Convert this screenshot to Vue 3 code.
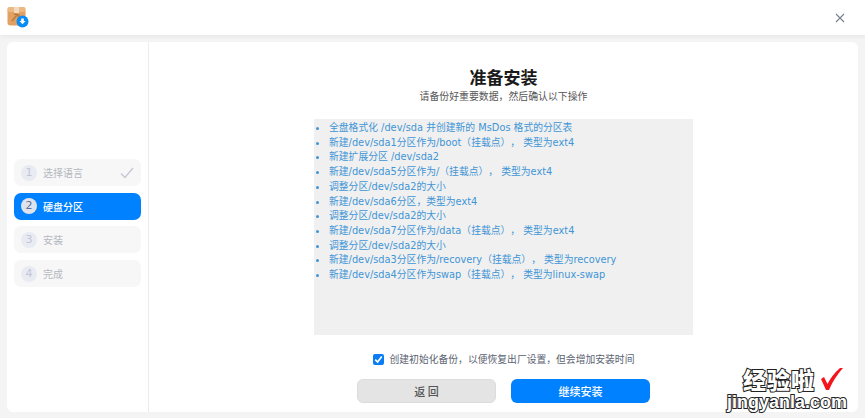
<template>
  <div class="window">
    <header class="titlebar">
      <svg class="app_icon" width="22" height="22" viewBox="0 0 22 22">
        <rect x="0.5" y="1" width="18" height="18.5" rx="3" fill="#e2a062" />
        <rect x="0.5" y="1" width="18" height="5" rx="2" fill="#edb983" />
        <rect x="7" y="1" width="5" height="6" fill="#f1d9bf" />
        <path d="M5 15 L10 9 M7 8 L12 9 L11 11" stroke="#b97b43" stroke-width="1.6" fill="none" />
        <circle cx="15.5" cy="15.5" r="6" fill="#0a8cf5" />
        <path d="M14.2 12.5h2.6v2.5h1.7l-3 3.3-3-3.3h1.7z" fill="#fff" />
      </svg>
      <button class="close_button">
        <svg width="10" height="10" viewBox="0 0 10 10">
          <path d="M1 1 L9 9 M9 1 L1 9" stroke="#77808f" stroke-width="1.1" fill="none" />
        </svg>
      </button>
    </header>

    <div class="body">
      <div class="panel">
        <aside class="sidebar">
          <div
            v-for="step in steps"
            :key="step.id"
            class="step"
            :class="{ active: step.id === 2 }"
          >
            <span class="step_num">{{ step.id }}</span>
            <span class="step_label">{{ step.label }}</span>
            <svg v-if="step.done" class="step_check" width="14" height="12" viewBox="0 0 14 12">
              <path d="M1 6.5 L5 10.5 L13 1" stroke="#c3c8d2" stroke-width="1.3" fill="none" />
            </svg>
          </div>
        </aside>

        <main class="content">
          <h1 class="title">准备安装</h1>
          <p class="subtitle">请备份好重要数据，然后确认以下操作</p>
          <ul class="ops">
            <li v-for="(op, i) in ops" :key="i">{{ op }}</li>
          </ul>
          <label class="backup">
            <svg width="11" height="11" viewBox="0 0 11 11">
              <rect width="11" height="11" rx="2" fill="#0a7cf5" />
              <path d="M2.2 5.6 L4.6 8 L8.8 2.6" stroke="#fff" stroke-width="1.7" fill="none" />
            </svg>
            <span>创建初始化备份，以便恢复出厂设置，但会增加安装时间</span>
          </label>
          <div class="buttons">
            <button class="btn back">返 回</button>
            <button class="btn next">继续安装</button>
          </div>
        </main>
      </div>
    </div>

    <div class="watermark">
      <div class="wm_top">
        <span class="wm_cn">经验啦</span>
        <svg width="23" height="24" viewBox="0 0 23 24">
          <path d="M1 12 L4 10 L7.5 17 Q12 8 20 1 L23 1 Q14 11 9 23 L6 23 Z" fill="#f5141c" />
        </svg>
      </div>
      <div class="wm_en">jingyanla.com</div>
    </div>
  </div>
</template>

<script setup>
const steps = [
  { id: 1, label: '选择语言', done: true },
  { id: 2, label: '硬盘分区' },
  { id: 3, label: '安装' },
  { id: 4, label: '完成' },
]

const ops = [
  '全盘格式化 /dev/sda 并创建新的 MsDos 格式的分区表',
  '新建/dev/sda1分区作为/boot（挂载点）， 类型为ext4',
  '新建扩展分区 /dev/sda2',
  '新建/dev/sda5分区作为/（挂载点）， 类型为ext4',
  '调整分区/dev/sda2的大小',
  '新建/dev/sda6分区，类型为ext4',
  '调整分区/dev/sda2的大小',
  '新建/dev/sda7分区作为/data（挂载点）， 类型为ext4',
  '调整分区/dev/sda2的大小',
  '新建/dev/sda3分区作为/recovery（挂载点）， 类型为recovery',
  '新建/dev/sda4分区作为swap（挂载点）， 类型为linux-swap',
]
</script>

<style>
html,
body {
  margin: 0;
  background: #fff;
}
</style>

<style scoped>
* {
  box-sizing: border-box;
  font-family: 'DejaVu Sans', 'Noto Sans CJK SC', sans-serif;
}
.window {
  position: relative;
  width: 865px;
  height: 418px;
  display: flex;
  flex-direction: column;
  background: #f4f4f4;
  overflow: hidden;
}
.titlebar {
  height: 35px;
  flex-shrink: 0;
  display: flex;
  align-items: center;
  justify-content: space-between;
  padding: 0 20px 0 7px;
  background: #fff;
  box-shadow: 0 2px 4px rgba(0, 0, 0, 0.05);
}
.app_icon {
  margin-top: -1px;
}
.close_button {
  width: 10px;
  height: 10px;
  padding: 0;
  border: 0;
  background: none;
  display: flex;
}
.body {
  flex: 1;
  padding: 7px 7px 6px;
  display: flex;
}
.panel {
  flex: 1;
  display: flex;
  background: #fff;
  border-radius: 6px;
}
.sidebar {
  width: 142px;
  flex-shrink: 0;
  border-right: 1px solid #ececec;
  padding: 117px 7px 0;
  display: flex;
  flex-direction: column;
  gap: 6.7px;
}
.step {
  height: 27px;
  display: flex;
  align-items: center;
  padding: 0 7px;
  background: #f7f7f8;
  border-radius: 7px;
  color: #b5b8bf;
  font-size: 10px;
  font-family: 'Noto Sans CJK SC', sans-serif;
}
.step_num {
  width: 16px;
  height: 16px;
  margin-right: 6px;
  border-radius: 50%;
  background: #e9ebf3;
  color: #c0c6d8;
  font-size: 11px;
  line-height: 16px;
  text-align: center;
}
.step_check {
  margin-left: auto;
}
.step.active {
  background: #0081ff;
  color: #fff;
  font-weight: 500;
}
.step.active .step_num {
  background: #dfe3ee;
  color: #5f6f95;
}
.content {
  flex: 1;
  display: flex;
  flex-direction: column;
  align-items: center;
  padding-top: 24px;
}
.title {
  margin: 0;
  font-size: 17px;
  line-height: 22px;
  font-weight: 700;
  color: #1a1a1a;
  font-family: 'Noto Sans CJK SC', sans-serif;
}
.subtitle {
  margin: 1px 0 0;
  font-size: 9.9px;
  line-height: 14px;
  color: #555;
  font-family: 'Noto Sans CJK SC', sans-serif;
}
.ops {
  width: 379px;
  height: 216px;
  margin: 16px 0 0;
  padding: 2px 0 0 15px;
  background: #f0f0f0;
  list-style: none;
  font-size: 9.8px;
  line-height: 14.7px;
  color: #3f95d6;
  text-spacing-trim: space-all;
}
.ops li {
  position: relative;
}
.ops li::before {
  content: '';
  position: absolute;
  left: -13px;
  top: 6px;
  width: 3px;
  height: 3px;
  border-radius: 50%;
  background: #3f95d6;
}
.backup {
  display: flex;
  align-items: center;
  gap: 6px;
  height: 14px;
  margin-top: 17px;
  font-size: 9.8px;
  color: #5a6170;
  font-family: 'Noto Sans CJK SC', sans-serif;
}
.buttons {
  display: flex;
  gap: 15px;
  margin-top: 13px;
}
.btn {
  width: 139px;
  height: 24px;
  padding: 0;
  border-radius: 6px;
  font-size: 11px;
  font-family: 'Noto Sans CJK SC', sans-serif;
  font-weight: 500;
}
.back {
  background: #e4e4e4;
  border: 1px solid #dcdcdc;
  color: #555;
}
.next {
  background: #0081ff;
  border: 0;
  color: #fff;
}
.watermark {
  position: absolute;
  right: 14px;
  bottom: 6px;
  width: 124px;
  pointer-events: none;
}
.wm_top {
  display: flex;
  align-items: center;
  justify-content: space-between;
  padding: 0 8px 0 16px;
  height: 26px;
}
.wm_cn {
  font-family: 'Noto Sans CJK SC', sans-serif;
  font-size: 23px;
  line-height: 24px;
  font-weight: 900;
  letter-spacing: 1px;
  color: #fff;
  -webkit-text-stroke: 2px #222;
  paint-order: stroke fill;
}
.wm_en {
  font-family: 'Liberation Sans', sans-serif;
  font-size: 18px;
  font-weight: 700;
  line-height: 20px;
  color: #fff;
  -webkit-text-stroke: 2px #222;
  paint-order: stroke fill;
  white-space: nowrap;
}
</style>
